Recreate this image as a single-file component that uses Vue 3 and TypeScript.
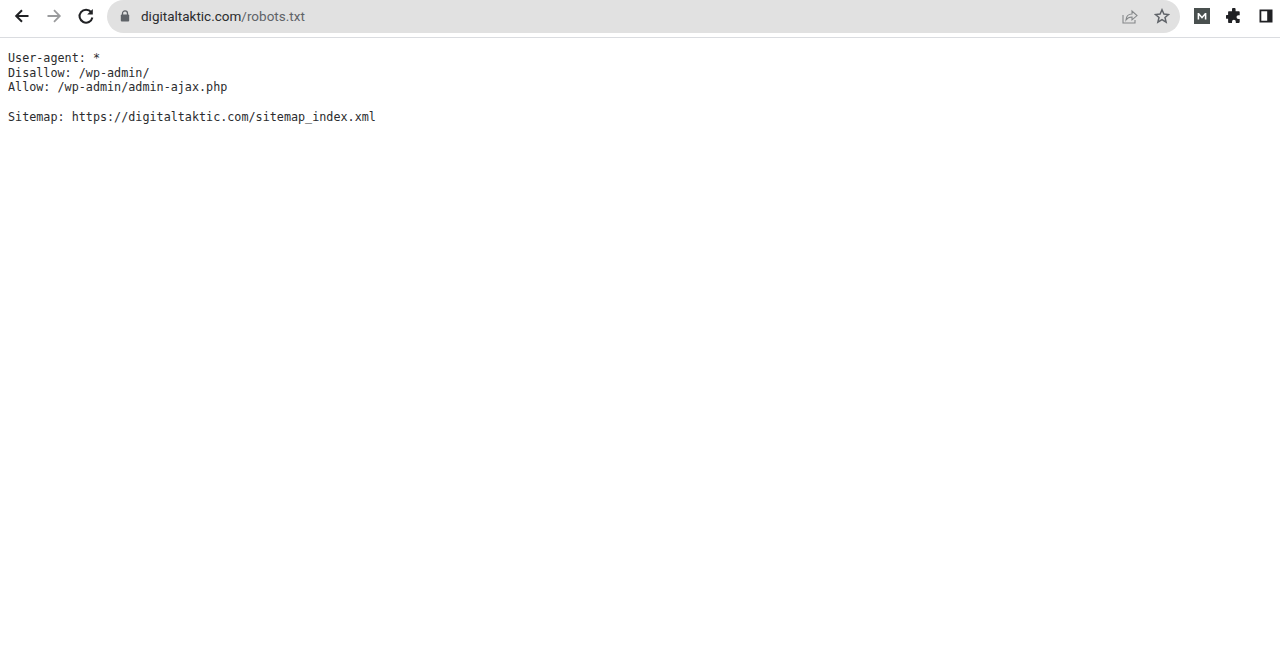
<script setup lang="ts">
const lines: string = `User-agent: *
Disallow: /wp-admin/
Allow: /wp-admin/admin-ajax.php

Sitemap: https://digitaltaktic.com/sitemap_index.xml`
</script>

<template>
  <div class="page">
    <header class="toolbar">
      <div class="nav">
        <svg class="ico" viewBox="0 0 18 18"><path d="M15.5 9H3.5M9 3.2 3.2 9 9 14.800" fill="none" stroke="#202124" stroke-width="2"/></svg>
        <svg class="ico" viewBox="0 0 18 18"><path d="M2.500 9h12M9 3.200 14.800 9 9 14.800" fill="none" stroke="#9a9b9d" stroke-width="1.800"/></svg>
        <svg class="ico" viewBox="0 0 18 18"><path d="M14.200 5.200A6.500 6.500 0 1 0 15.400 10.500" fill="none" stroke="#202124" stroke-width="2"/><path d="M15.800 2V7.600H10.200Z" fill="#202124"/></svg>
      </div>
      <div class="omnibox">
        <svg class="lock" viewBox="0 0 10 12"><path d="M2.500 5V3.400a2.500 2.500 0 0 1 5 0V5" fill="none" stroke="#5f6368" stroke-width="1.300"/><rect x="0.800" y="4.600" width="8.400" height="7" rx="1" fill="#5f6368"/></svg>
        <div class="url"><span class="host">digitaltaktic.com</span><span class="path">/robots.txt</span></div>
        <svg class="share" viewBox="0 0 16 16"><path d="M1 7v8h12v-3" fill="none" stroke="#85888a" stroke-width="1.100"/><path d="M4 12c.3-4 3-6 6-6V3l5 4.600-5 4.200V9c-2.500 0-4.600.9-6 3Z" fill="none" stroke="#85888a" stroke-width="1.100"/></svg>
        <svg class="star" viewBox="0 0 16 16"><path d="m8 1.800 1.900 4.300 4.600.4-3.500 3 1.100 4.600L8 11.700l-4.100 2.400L5 9.500l-3.500-3 4.600-.4Z" fill="none" stroke="#5f6368" stroke-width="1.500"/></svg>
      </div>
      <div class="exts">
        <div class="mbox"><svg viewBox="0 0 16 16" class="m"><path d="M3 12V4.500h1.600L8 8.500l3.400-4H13V12h-1.800V7.500L8 11 4.800 7.500V12Z" fill="#fff"/></svg></div>
        <svg class="puzzle" viewBox="0 0 16 16"><path d="M6 1.500a1.800 1.800 0 0 1 3.600 0V3.300h3.300a.8.8 0 0 1 .8.8V7.200h-1.300a1.900 1.900 0 0 0 0 3.800h1.300v3.100a.8.8 0 0 1-.8.8H9.800v-1.200a1.900 1.900 0 0 0-3.800 0V15H2.900a.8.8 0 0 1-.8-.8V10.800H1a1.900 1.900 0 0 1 0-3.800h1.100V4.100a.8.8 0 0 1 .8-.8H6Z" fill="#202124"/></svg>
        <svg class="panel" viewBox="0 0 14 14"><path fill-rule="evenodd" d="M0.500 0.500H13.500V13.500H0.500ZM2.300 2.300V11.700H8.200V2.300Z" fill="#202124"/></svg>
      </div>
    </header>
    <pre class="content">{{ lines }}</pre>
  </div>
</template>

<style scoped>
.page {
  display: flex;
  flex-direction: column;
  height: 651px;
  background: #fff;
  overflow: hidden;
}
.toolbar {
  display: flex;
  align-items: center;
  height: 33px;
  padding-bottom: 4px;
  flex: none;
  box-sizing: content-box;
  border-bottom: 1px solid #dadce0;
  background: #fff;
}
.nav {
  display: flex;
  align-items: center;
  gap: 14px;
  padding: 0 0 2px 13px;
  width: 107px;
  flex: none;
  box-sizing: border-box;
}
.ico {
  width: 18px;
  height: 18px;
  flex: none;
}
.omnibox {
  display: flex;
  align-items: center;
  width: 1073px;
  flex: none;
  height: 33px;
  background: #e1e1e1;
  border-radius: 17px;
  padding: 0 10px 2px 13px;
  box-sizing: border-box;
}
.lock {
  width: 10px;
  height: 12px;
  flex: none;
}
.url {
  flex: 1;
  margin-left: 11px;
  font: 13.5px/16px Roboto, "Noto Sans", sans-serif;
}
.host {
  color: #2b2c2e;
}
.path {
  color: #5f6368;
}
.share {
  width: 16px;
  height: 16px;
  margin-right: 16px;
}
.star {
  width: 16px;
  height: 16px;
}
.exts {
  display: flex;
  align-items: center;
  margin-left: 14px;
  gap: 16px;
  padding-bottom: 2px;
}
.mbox {
  width: 16px;
  height: 16px;
  background: #49504f;
  display: flex;
  align-items: center;
  justify-content: center;
}
.m {
  width: 14px;
  height: 14px;
}
.puzzle {
  width: 16px;
  height: 16px;
}
.panel {
  width: 14px;
  height: 14px;
  margin-left: 1px;
}
.content {
  margin: 0;
  padding: 13px 8px 0;
  font: 11.75px/14.67px "DejaVu Sans Mono", monospace;
  color: #2b2c2e;
}
</style>
